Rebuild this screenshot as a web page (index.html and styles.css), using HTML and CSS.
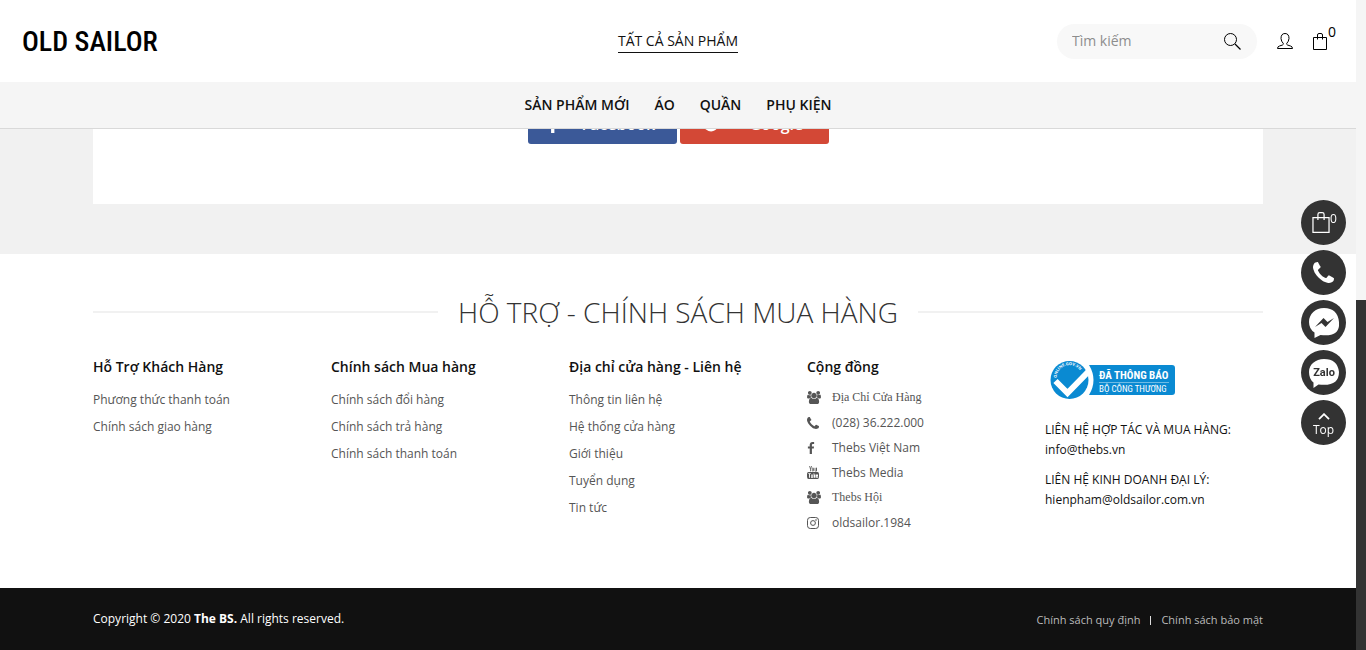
FILE: index.html
```html
<!DOCTYPE html>
<html lang="vi">
<head>
<meta charset="utf-8">
<meta name="viewport" content="width=device-width, initial-scale=1">
<title>Old Sailor</title>
<link rel="stylesheet" href="styles.css">
</head>
<body>
<svg class="sprite" aria-hidden="true">
  <symbol id="i-group" viewBox="0 0 1920 1792"><path d="M593 896q-162 5-265 128h-134q-82 0-138-40.500t-56-118.500q0-353 124-353 6 0 43.500 21t97.500 42.500 119 21.500q67 0 133-23-5 37-5 66 0 159 81 286zm1071 637q0 120-73 189.500t-194 69.500h-874q-121 0-194-69.500t-73-189.500q0-53 3.500-103.500t14-109 26.500-108.500 43-97.500 62-81 85.500-53.500 111.500-20q10 0 43 21.500t73 48 107 48 135 21.500 135-21.500 107-48 73-48 43-21.500q61 0 111.500 20t85.500 53.500 62 81 43 97.500 26.500 108.500 14 109 3.500 103.500zm-1024-1277q0 106-75 181t-181 75-181-75-75-181 75-181 181-75 181 75 75 181zm704 384q0 159-112.500 271.500t-271.500 112.500-271.500-112.500-112.500-271.500 112.500-271.500 271.500-112.500 271.500 112.500 112.500 271.500zm576 225q0 78-56 118.500t-138 40.500h-134q-103-123-265-128 81-127 81-286 0-29-5-66 66 23 133 23 59 0 119-21.500t97.500-42.500 43.500-21q124 0 124 353zm-128-609q0 106-75 181t-181 75-181-75-75-181 75-181 181-75 181 75 75 181z"/></symbol>
  <symbol id="i-phone" viewBox="192 128 1408 1408"><path d="M1600 1240q0 27-10 70.500t-21 68.500q-21 50-122 106-94 51-186 51-27 0-53-3.500t-57.500-12.500-47-14.500-55.500-20.500-49-18q-98-35-175-83-127-79-264-216t-216-264q-48-77-83-175-3-9-18-49t-20.500-55.500-14.500-47-12.500-57.500-3.500-53q0-92 51-186 56-101 106-122 25-11 68.500-21t70.500-10q14 0 21 3 18 6 53 76 11 19 30 54t35 63.500 31 53.500q3 4 17.500 25t21.500 35.500 7 28.500q0 20-28.500 50t-62 55-62 53-28.500 46q0 9 5 22.500t8.500 20.500 14 24 11.500 19q76 137 174 235t235 174q2 1 19 11.500t24 14 20.500 8.500 22.500 5q18 0 46-28.500t53-62 55-62 50-28.500q14 0 28.500 7t35.500 21.500 25 17.500q25 15 53.500 31t63.500 35 54 30q70 35 76 53 3 7 3 21z"/></symbol>
  <symbol id="i-facebook" viewBox="479 0 864 1664"><path d="M1343 12v264h-157q-86 0-116 36t-30 108v189h293l-39 296h-254v759h-306v-759h-255v-296h255v-218q0-186 104-288.500t277-102.500q147 0 228 12z"/></symbol>
  <symbol id="i-bag" viewBox="0 0 14 17"><path d="M.5 4.500h13v12H.5zM4.500 6.500V2q0-1.500 1.500-1.500h2Q9.500.5 9.500 2v4.500" fill="none" stroke="currentColor"/></symbol>
</svg>
<div class="frame">
<div class="page">
  <header class="header">
    <div class="topbar">
      <a class="logo" href="#">OLD SAILOR</a>
      <a class="all" href="#">TẤT CẢ SẢN PHẨM</a>
      <div class="tools">
        <form class="search">
          <input type="text" placeholder="Tìm kiếm" aria-label="Tìm kiếm">
          <button type="button" aria-label="Tìm"><svg class="line" width="17" height="17" viewBox="0 0 17 17"><circle cx="6.500" cy="6.500" r="6"/><path d="M11 11l5.500 5.500" stroke-width="1.300"/></svg></button>
        </form>
        <a class="user" href="#" aria-label="Tài khoản"><svg class="line" width="16" height="16" viewBox="0 0 16 16"><path d="M.5 15.500h15q0-2-2-2.500l-3-1q-1-.4-.8-1.500 2-2 2.300-5Q12 .5 8 .5T4 5.500q.3 3 2.300 5 .2 1.100-.8 1.500l-3 1q-2 .5-2 2.500z"/></svg></a>
        <a class="cart" href="#" aria-label="Giỏ hàng"><svg width="14" height="17"><use href="#i-bag"/></svg><span>0</span></a>
      </div>
    </div>
    <nav class="nav">
      <a href="#">SẢN PHẨM MỚI</a><a href="#">ÁO</a><a href="#">QUẦN</a><a href="#">PHỤ KIỆN</a>
    </nav>
  </header>
  <main class="main">
    <div class="card container">
      <button class="social fb" type="button"><svg width="10" height="18"><use href="#i-facebook"/></svg><span>Facebook</span></button>
      <button class="social gg" type="button"><svg class="line" width="18" height="18" viewBox="0 0 18 18"><path d="M14 4.500A6.500 6.500 0 1 0 15.500 9H9" stroke-width="2.600"/></svg><span>Google</span></button>
    </div>
  </main>
  <footer class="footer">
    <div class="container">
      <h2 class="title">HỖ TRỢ - CHÍNH SÁCH MUA HÀNG</h2>
      <div class="cols">
        <section><h3>Hỗ Trợ Khách Hàng</h3>
          <ul class="links"><li><a href="#">Phương thức thanh toán</a></li><li><a href="#">Chính sách giao hàng</a></li></ul></section>
        <section><h3>Chính sách Mua hàng</h3>
          <ul class="links"><li><a href="#">Chính sách đổi hàng</a></li><li><a href="#">Chính sách trả hàng</a></li><li><a href="#">Chính sách thanh toán</a></li></ul></section>
        <section><h3>Địa chỉ cửa hàng - Liên hệ</h3>
          <ul class="links"><li><a href="#">Thông tin liên hệ</a></li><li><a href="#">Hệ thống cửa hàng</a></li><li><a href="#">Giới thiệu</a></li><li><a href="#">Tuyển dụng</a></li><li><a href="#">Tin tức</a></li></ul></section>
        <section><h3>Cộng đồng</h3>
          <ul class="community">
            <li><svg width="14" height="13"><use href="#i-group"/></svg><a class="serif" href="#">Địa Chỉ Cửa Hàng</a></li>
            <li><svg width="12" height="12"><use href="#i-phone"/></svg><a href="#">(028) 36.222.000</a></li>
            <li><svg width="8" height="12"><use href="#i-facebook"/></svg><a href="#">Thebs Việt Nam</a></li>
            <li><svg width="12" height="13" viewBox="0 0 12 13"><path d="M2.500 0l1 3v2.300M4.600 0l-1 3M5.300 2.500q0-.7.600-.7t.6.7v2q0 .7-.6.700t-.6-.7zM8 1.800v2.800q0 .6.500.6t1-.6V1.800v3.500" fill="none" stroke="currentColor" stroke-width=".8"/><path fill-rule="evenodd" d="M1.500 6h9Q12 6 12 8v2.500q0 2.500-1.500 2.500h-9Q0 13 0 10.500V8q0-2 1.500-2zM1.300 7.200v.8h.8v3.800H3V8h.8v-.8zM4 8.500v3.300h2V8.500h-.7v2.600h-.6V8.500zM6.600 7.200v4.600h1.900V8.500H7.300V7.200zM9 8.500v3.300h2v-1h-.8v.4h-.5v-.8H11V8.500z"/></svg><a href="#">Thebs Media</a></li>
            <li><svg width="14" height="13"><use href="#i-group"/></svg><a class="serif" href="#">Thebs Hội</a></li>
            <li><svg width="12" height="12" viewBox="0 0 12 12"><rect x=".5" y=".5" width="11" height="11" rx="2.800" fill="none" stroke="currentColor"/><circle cx="6" cy="6" r="2.400" fill="none" stroke="currentColor"/><circle cx="9" cy="3" r=".8"/></svg><a href="#">oldsailor.1984</a></li>
          </ul></section>
        <section class="contact">
          <svg class="badge" width="126" height="40" viewBox="0 0 126 40">
            <path d="M39 5h83q3 0 3 3v24q0 3-3 3H39q9-15 0-30z" fill="#0a8ad2"/>
            <circle cx="19.500" cy="20" r="19" fill="#0a8ad2"/>
            <path d="M5.500 21l12 12L39 11" fill="none" stroke="#fff" stroke-width="6"/>
            <path id="arc" d="M6.500 18A13 13 0 0 1 31 12" fill="none"/>
            <text fill="#fff" font-size="4" font-weight="700"><textPath href="#arc">ONLINE.GOV.VN</textPath></text>
            <text class="badge-a" x="49" y="19">ĐÃ THÔNG BÁO</text>
            <path d="M49 22.500h70" stroke="#9bd0ee" stroke-width=".7"/>
            <text class="badge-b" x="49" y="32">BỘ CÔNG THƯƠNG</text>
          </svg>
          <p>LIÊN HỆ HỢP TÁC VÀ MUA HÀNG:<br>info@thebs.vn</p>
          <p>LIÊN HỆ KINH DOANH ĐẠI LÝ:<br>hienpham@oldsailor.com.vn</p>
        </section>
      </div>
    </div>
    <div class="bottom"><div class="container legal">
      <p>Copyright © 2020 <b>The BS.</b> All rights reserved.</p>
      <div class="policy"><a href="#">Chính sách quy định</a><i></i><a href="#">Chính sách bảo mật</a></div>
    </div></div>
  </footer>
</div>
<div class="scroll"><div class="thumb"></div></div>
</div>
<aside class="float">
  <a href="#" aria-label="Giỏ hàng"><svg width="18" height="21"><use href="#i-bag"/></svg><span>0</span></a>
  <a href="#" aria-label="Gọi"><svg width="21" height="21"><use href="#i-phone"/></svg></a>
  <a href="#" aria-label="Messenger"><svg width="30" height="30" viewBox="0 0 30 30"><path fill="#fff" d="M15 0C6.500 0 0 6 0 14q0 7 5.500 10.500V30l6-3q20 2.500 18.500-13Q28.500 0 15 0z"/><path fill="#333" d="M6 19l8.500-9 4 4 6.500-4-8.500 9-4-4z"/></svg></a>
  <a href="#" aria-label="Zalo"><svg width="30" height="30" viewBox="0 0 30 30"><path fill="#fff" d="M15 1C6.500 1 0 6.500 0 14q0 7 4.500 10.500V30l5-3.500Q30 29 30 14 28.500 1 15 1z"/><text class="zalo" x="15" y="18" text-anchor="middle">Zalo</text></svg></a>
  <button type="button"><svg class="line" width="12" height="7" viewBox="0 0 12 7"><path d="M1 6.200l5-5 5 5" stroke-width="1.800"/></svg>Top</button>
</aside>
</body>
</html>
```
FILE: styles.css
```css
* { box-sizing: border-box; }
body { margin: 0; font: 12px/20px "Open Sans", sans-serif; color: #111; background: #fff; }
a { color: inherit; text-decoration: none; }
p, h2, h3, ul { margin: 0; padding: 0; }
ul { list-style: none; }
button { font: inherit; color: inherit; border: 0; background: none; padding: 0; }
svg { fill: currentColor; display: block; }
.line { fill: none; stroke: currentColor; }
.sprite { position: absolute; width: 0; height: 0; }
.frame { display: grid; grid-template-columns: minmax(0, 1fr) 10px; min-height: 100vh; }
.page { display: flex; flex-direction: column; }
.scroll { background: #f5f5f5; display: flex; align-items: flex-end; }
.thumb { width: 100%; height: 350px; max-height: 100%; background: #333; }
.container { width: calc(100% - 30px); max-width: 1170px; margin: 0 auto; }

.header { position: relative; z-index: 2; background: #fff; }
.topbar { display: grid; grid-template-columns: 1fr auto 1fr; align-items: center; height: 82px; padding: 0 20px; }
.logo { padding: 2px 0 0 2px; font: 500 28px/36px "Roboto Condensed", "Liberation Sans Narrow", "Liberation Sans", sans-serif; color: #000; justify-self: start; }
.all { font-size: 14px; line-height: 22px; border-bottom: 1px solid #111; }
.tools { display: flex; align-items: center; justify-content: flex-end; color: #000; }
.search { display: flex; align-items: center; width: 200px; height: 35px; padding: 0 16px 0 15px; border-radius: 18px; background: #f8f8f8; }
.search input { flex: 1; min-width: 0; padding: 0; border: 0; outline: 0; background: none; font: 14px/20px "Open Sans", sans-serif; }
.search input::placeholder { color: #8d8d8d; opacity: 1; }
.user { margin: 0 20px; }
.cart { display: flex; }
.cart span { font-size: 14px; line-height: 14px; margin-top: -8px; padding-left: 1px; }
.nav { display: flex; flex-wrap: wrap; justify-content: center; gap: 25px; height: 47px; line-height: 46px; font-size: 14px; font-weight: 600; background: #f5f5f5; border-bottom: 1px solid #d9d9d9; }

.main { background: #f1f1f1; padding-bottom: 50px; }
.card { display: flex; justify-content: center; align-items: flex-start; gap: 3px; background: #fff; padding-bottom: 60px; }
.social { display: flex; align-items: center; gap: 24px; width: 149px; height: 40px; margin-top: -25px; padding-left: 20px; border-radius: 3px; color: #fff; font-size: 16px; font-weight: 600; }
.fb { background: #3b5998; }
.gg { padding-left: 22px; gap: 30px; background: #d34836; }

.footer { flex: 1; display: flex; flex-direction: column; padding-top: 38px; }
.title { display: flex; align-items: center; gap: 20px; font-size: 28px; line-height: 40px; font-weight: 300; color: #333; text-align: center; }
.title::before, .title::after { content: ""; flex: 1; height: 2px; background: #f1f1f1; }
.cols { display: grid; grid-template-columns: repeat(auto-fit, minmax(200px, 1fr)); gap: 20px; padding: 25px 0 51px; }
.cols h3 { font-size: 14px; line-height: 20px; font-weight: 600; color: #111; }
.links { padding-top: 9px; color: #555; }
.links li { line-height: 27px; }
.community { padding-top: 8px; color: #555; }
.community li { display: grid; grid-template-columns: 25px 1fr; align-items: center; line-height: 25px; }
.serif { font-family: "Liberation Serif", serif; }
.contact .badge { margin: 3px 0 20px 5px; }
.contact p { margin-bottom: 10px; }
.badge-a { fill: #fff; font: 700 11px "Roboto Condensed", Roboto, sans-serif; }
.badge-b { fill: #fff; font: 400 9px "Roboto Condensed", Roboto, sans-serif; }
.bottom { margin-top: auto; background: #111; color: #fff; }
.legal { display: flex; align-items: center; justify-content: space-between; min-height: 62px; }
.policy { display: flex; align-items: center; gap: 10px; padding-top: 2px; font-size: 11px; color: #bbb; }
.policy i { width: 1px; height: 9px; background: #ddd; }

.float { position: fixed; right: 20px; top: 200px; display: grid; gap: 5px; }
.float a, .float button { display: flex; align-items: center; justify-content: center; width: 45px; height: 45px; border-radius: 50%; background: #333; color: #fff; }
.float a:first-child { padding-right: 5px; }
.float a span { width: 0; margin-top: -8px; }
.float button { flex-direction: column; line-height: 16px; padding-top: 6px; }
.float button svg { margin-bottom: 2px; }
.zalo { fill: #333; font: 700 11px Roboto, sans-serif; }
```
